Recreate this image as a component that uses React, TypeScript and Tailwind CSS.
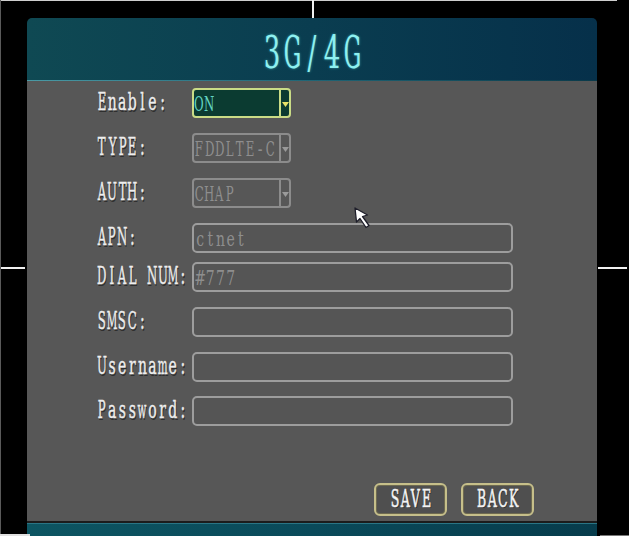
import React from "react";

const serif = { fontFamily: '"DejaVu Serif", "Liberation Serif", serif' };

function glyph(ch: string) {
  if (ch === " ") return "\u00a0";
  if ("MmWw".includes(ch)) return <span className="inline-block scale-x-[0.74]">{ch}</span>;
  if (/[A-Z]/.test(ch)) return <span className="inline-block scale-x-[0.84]">{ch}</span>;
  return ch;
}

function Cells({ text, cell }: { text: string; cell: string }) {
  return (
    <>
      {text.split("").map((ch, i) => (
        <span key={i} className={cell}>
          {glyph(ch)}
        </span>
      ))}
    </>
  );
}

function Label({ text }: { text: string }) {
  return (
    <div className="w-[95px] shrink-0 pt-[1px]">
      <span
        className="inline-block whitespace-nowrap origin-left text-[14px] leading-[17px] text-[#eeeeee] scale-y-[1.68] [text-shadow:1px_1px_0_#2e2e2e] [-webkit-text-stroke:0.25px_#eeeeee]"
        style={serif}
      >
        <Cells text={text} cell="inline-flex justify-center w-[10.1px]" />
      </span>
    </div>
  );
}

function BoxText({ text, color }: { text: string; color: string }) {
  return (
    <span
      className={
        "inline-block whitespace-nowrap origin-left text-[14px] leading-none scale-y-[1.5] " +
        color
      }
      style={serif}
    >
      <Cells text={text} cell="inline-flex justify-center w-[10.2px]" />
    </span>
  );
}

function Select({ value, active }: { value: string; active?: boolean }) {
  return (
    <div
      className={
        active
          ? "w-[99px] h-[30px] border-2 border-[#cadc86] rounded-[4px] bg-[#0b3b31] flex overflow-hidden"
          : "w-[99px] h-[30px] border-2 border-[#8c8c8c] rounded-[4px] bg-[#575757] flex overflow-hidden"
      }
    >
      <div className="flex-1 overflow-hidden flex items-center">
        <BoxText text={value} color={active ? "text-[#62d4c2]" : "text-[#8e8e8e]"} />
      </div>
      <div
        className={
          active
            ? "w-[10px] border-l-2 border-[#cadc86] flex items-center justify-center pt-[2px]"
            : "w-[10px] border-l-2 border-[#8c8c8c] flex items-center justify-center pt-[2px]"
        }
      >
        <svg width="7" height="5" viewBox="0 0 7 5">
          <path d="M0 0 L7 0 L3.5 5 Z" fill={active ? "#e6e068" : "#9a9a9a"} />
        </svg>
      </div>
    </div>
  );
}

function Input({ value }: { value?: string }) {
  return (
    <div className="w-[321px] h-[30px] border-2 border-[#9d9d9d] rounded-[5px] bg-[#555555] flex items-center pl-[1px] overflow-hidden">
      {value ? <BoxText text={value} color="text-[#8e8e8e]" /> : null}
    </div>
  );
}

function Btn({ text }: { text: string }) {
  return (
    <div className="w-[73px] h-[33px] border-2 border-[#c6bf8a] rounded-[6px] bg-[#4f4f4f] flex items-center justify-center shadow-[inset_0_0_0_1px_#6e6a50]">
      <span
        className="inline-block whitespace-nowrap text-[15px] leading-none scale-y-[1.58] text-[#f4f4f4] [text-shadow:1px_1px_0_#2a2a2a] [-webkit-text-stroke:0.35px_#f4f4f4]"
        style={serif}
      >
        <Cells text={text} cell="inline-flex justify-center w-[10.5px]" />
      </span>
    </div>
  );
}

export default function App() {
  return (
    <div className="relative w-[629px] h-[536px] bg-black overflow-hidden">
      <div className="ml-[27px] pt-[18px] w-[570px] flex flex-col">
        <div className="h-[63px] rounded-t-[5px] bg-gradient-to-r from-[#0f4953] via-[#0a3d50] to-[#06304a] flex flex-col">
          <div className="flex-1 flex justify-center pt-[25px]">
            <span
              className="inline-block whitespace-nowrap text-[26px] leading-[26px] text-[#8ef0f0] scale-y-[1.72] [text-shadow:0_0_2px_#3aa0a8]"
              style={serif}
            >
              <Cells text="3G/4G" cell="inline-flex justify-center w-[20px]" />
            </span>
          </div>
          <div className="h-[1px] bg-gradient-to-r from-[#4a9aa5] via-[#1f6575] to-[#0a3a4a]" />
        </div>
        <div className="h-[440px] bg-[#575757] flex flex-col pl-[70px] pt-[7px] pb-[5px] pr-[63px]">
          <div className="flex h-[30px]">
            <Label text="Enable:" />
            <Select value="ON" active />
          </div>
          <div className="flex h-[30px] mt-[15px]">
            <Label text="TYPE:" />
            <Select value="FDDLTE-C" />
          </div>
          <div className="flex h-[30px] mt-[15px]">
            <Label text="AUTH:" />
            <Select value="CHAP" />
          </div>
          <div className="flex h-[30px] mt-[15px]">
            <Label text="APN:" />
            <Input value="ctnet" />
          </div>
          <div className="flex h-[30px] mt-[9px]">
            <Label text="DIAL NUM:" />
            <Input value="#777" />
          </div>
          <div className="flex h-[30px] mt-[15px]">
            <Label text="SMSC:" />
            <Input />
          </div>
          <div className="flex h-[30px] mt-[15px]">
            <Label text="Username:" />
            <Input />
          </div>
          <div className="flex h-[30px] mt-[14px]">
            <Label text="Password:" />
            <Input />
          </div>
          <div className="mt-auto flex justify-end gap-[14px]">
            <Btn text="SAVE" />
            <Btn text="BACK" />
          </div>
        </div>
        <div className="h-[2px] bg-[#1c1c1c]" />
        <div className="h-[13px] bg-gradient-to-r from-[#0d5562] via-[#0a4a5a] to-[#073c4c] border-t border-[#2a7585]" />
      </div>

      {/* video overlay artifacts */}
      <div className="absolute left-0 top-0 w-[617px] h-[1px] bg-[#cfcfcf]" />
      <div className="absolute left-[312px] top-0 w-[2px] h-[18px] bg-[#f0f0f0]" />
      <div className="absolute left-0 top-[267px] w-[25px] h-[2px] bg-[#f0f0f0]" />
      <div className="absolute left-[598px] top-[267px] w-[29px] h-[2px] bg-[#f0f0f0]" />
      <div className="absolute left-0 top-0 w-[1px] h-[536px] bg-[#5a5a5a]" />
      <div className="absolute left-0 top-[534px] w-[30px] h-[2px] bg-[#e0e0e0]" />
      <div className="absolute left-[600px] top-[535px] w-[29px] h-[1px] bg-[#777]" />

      {/* mouse cursor */}
      <svg
        className="absolute left-[354px] top-[207px]"
        width="18"
        height="24"
        viewBox="0 0 18 24"
      >
        <path
          d="M1 1 L13.5 8 L8.5 9.5 L15 18.5 L12 20.5 L6 11.5 L2.5 15 Z"
          fill="#ffffff"
          stroke="#1e1e2a"
          strokeWidth="1.3"
          strokeLinejoin="round"
        />
      </svg>
    </div>
  );
}
